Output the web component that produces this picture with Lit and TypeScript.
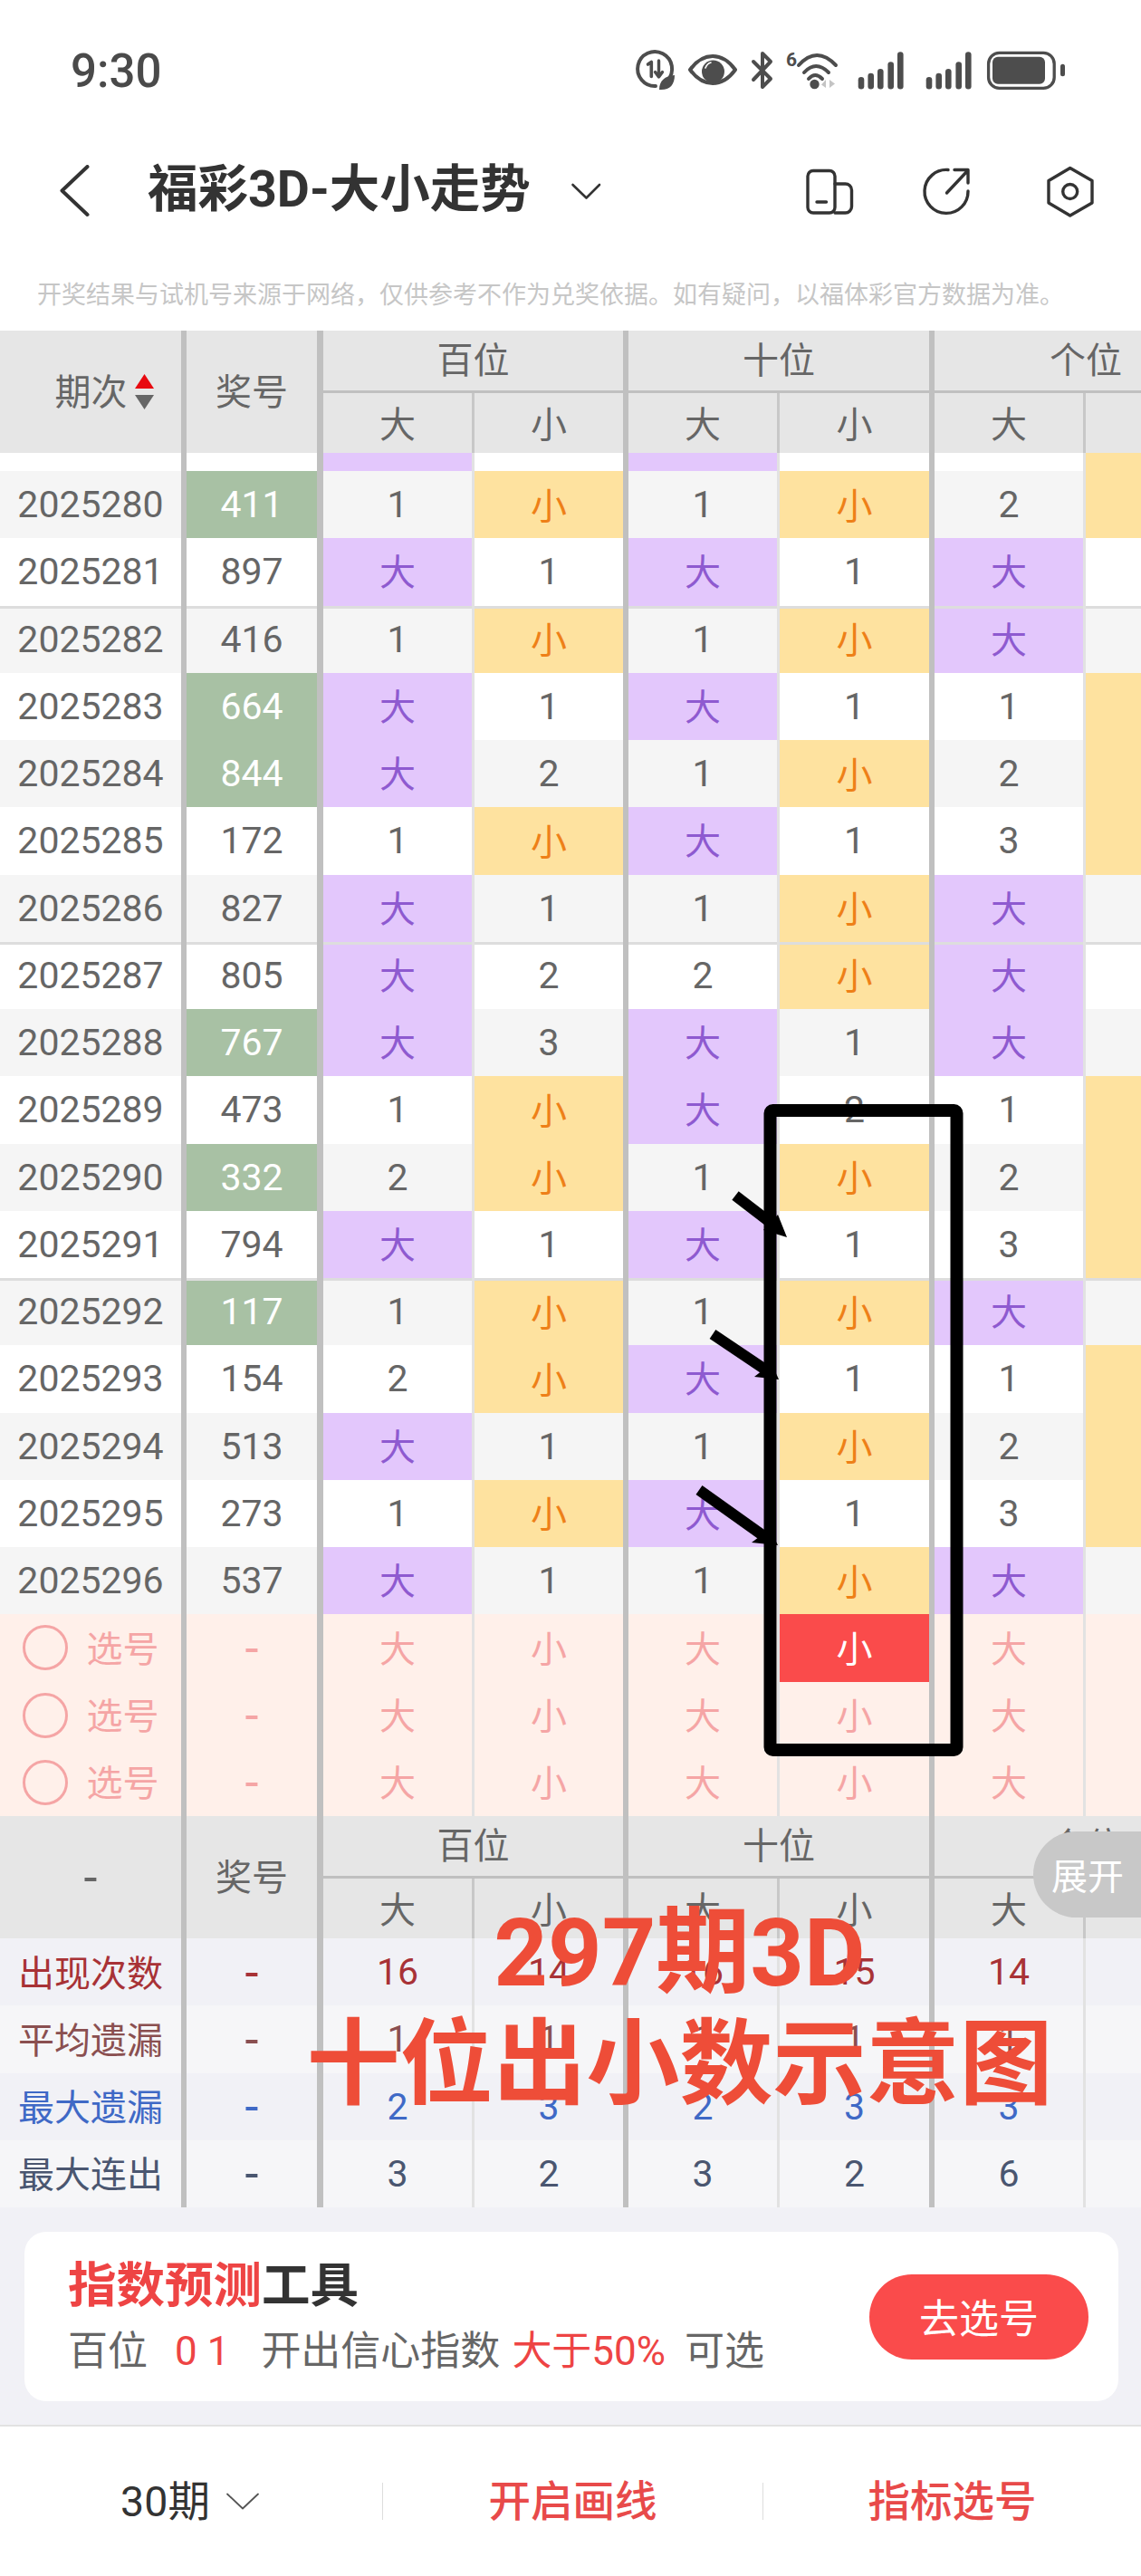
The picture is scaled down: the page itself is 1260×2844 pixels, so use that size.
import { LitElement, html, css, svg } from "lit";
import { customElement } from "lit/decorators.js";

const BIG = "大";
const SMALL = "小";
type Row = { id: string; num: string; hot?: boolean; sep?: boolean; v: string[] };

const raw: [string, string, string, string, string][] = [
  ["2025280", "411", "1小", "1小", "2"],
  ["2025281", "897", "大1", "大1", "大"],
  ["2025282", "416", "1小", "1小", "大"],
  ["2025283", "664", "大1", "大1", "1"],
  ["2025284", "844", "大2", "1小", "2"],
  ["2025285", "172", "1小", "大1", "3"],
  ["2025286", "827", "大1", "1小", "大"],
  ["2025287", "805", "大2", "2小", "大"],
  ["2025288", "767", "大3", "大1", "大"],
  ["2025289", "473", "1小", "大2", "1"],
  ["2025290", "332", "2小", "1小", "2"],
  ["2025291", "794", "大1", "大1", "3"],
  ["2025292", "117", "1小", "1小", "大"],
  ["2025293", "154", "2小", "大1", "1"],
  ["2025294", "513", "大1", "1小", "2"],
  ["2025295", "273", "1小", "大1", "3"],
  ["2025296", "537", "大1", "1小", "大"],
];

const HOT = new Set(["411", "664", "844", "767", "332", "117"]);
const SEP = new Set(["2025282", "2025287", "2025292"]);

const rows: Row[] = raw.map(([id, num, a, b, c]) => ({
  id,
  num,
  hot: HOT.has(num),
  sep: SEP.has(id),
  v: [a[0], a[1], b[0], b[1], c, c === BIG ? "" : SMALL],
}));

const summary = [
  { label: "出现次数", tone: "t-red", v: [16, 14, 16, 15, 14] },
  { label: "平均遗漏", tone: "t-brown", v: [1, 1, 1, 1, 1] },
  { label: "最大遗漏", tone: "t-blue", v: [2, 3, 2, 3, 3] },
  { label: "最大连出", tone: "t-slate", v: [3, 2, 3, 2, 6] },
];

const sideClass = ["thin", "thick", "thin", "thick", "thin", "none"];

@customElement("app-root")
export class AppRoot extends LitElement {
  static styles = css`
    :host {
      display: block;
      position: relative;
      width: 1260px;
      height: 2844px;
      overflow: hidden;
      background: #fff;
      font-family: Roboto, "Noto Sans CJK SC", sans-serif;
      color: #666;
    }
    * { box-sizing: border-box; }
    svg { display: block; flex: none; }

    .status { height: 158px; display: flex; justify-content: space-between; padding: 50px 75px 0 78px; }
    .time { font-size: 51px; line-height: 58px; font-weight: 500; color: #4a4a4a; }

    .nav { height: 106px; display: flex; align-items: center; padding-left: 66px; }
    .title { font-size: 55.5px; line-height: 66px; font-weight: 700; color: #333; margin-left: 63px; padding-bottom: 2px; white-space: nowrap; }
    .nav-caret { margin-left: 44px; }
    .nav-tools { margin-left: auto; margin-right: 50px; }

    .note { height: 101px; padding: 45px 0 0 41px; font-size: 27px; line-height: 34px; color: #c6c6c6; white-space: nowrap; }

    .table { width: 1260px; overflow: hidden; }
    .grid { display: grid; width: 1366px; grid-template-columns: 206px 151px 167px 170px 167px 171px 167px 167px; }
    .head { grid-template-rows: 69px 66px; background: #e6e6e6; }
    .body { grid-auto-rows: 74.25px; }
    .partial { grid-auto-rows: 20px; }

    .cell { display: flex; align-items: center; justify-content: center; font-size: 40px; white-space: nowrap; }
    .id { font-size: 41px; }
    .thick { border-right: 6px solid #c0c0c0; }
    .thick-7 { border-right: 7px solid #c0c0c0; }
    .thin { border-right: 3px solid #e2e2e2; }
    .none { border-right: 0; }

    .h { background: #e6e6e6; font-size: 40px; color: #666; padding-bottom: 3px; }
    .h.thin { border-right-color: #c8c8c8; }
    .tall { grid-row: span 2; padding-bottom: 5px; }
    .wide { grid-column: span 2; border-bottom: 3px solid #c0c0c0; padding-bottom: 6px; }
    .sortable { padding-left: 30px; gap: 8px; }
    .sortable svg { margin-top: 5px; }

    .gray { background: #f5f5f5; }
    .white { background: #fff; }
    .sep { box-shadow: inset 0 3px 0 #ddd; }
    .hot { background: #a8c1a4; color: #fff; }
    .big { background: #e3c7fc; color: #8e5ad0; font-size: 40px; padding-bottom: 4px; }
    .small { background: #fee29f; color: #ee8018; font-size: 40px; padding-bottom: 3px; }

    .pick { background: #fff0ea; color: #f5a5a5; padding-bottom: 3px; }
    .pick.on { background: #fa4b4b; color: #fff; }
    .pick-label { gap: 21px; padding-bottom: 0; }
    .pick-label span:last-child { padding-bottom: 3px; }
    .ring { width: 50px; height: 50px; border: 3px solid #f5a5a5; border-radius: 50%; }
    .dash { font-size: 54px; padding-bottom: 0; }

    .sum-a { background: #f1f1f6; }
    .sum-b { background: #f6f6f8; }
    .label { padding-bottom: 3px; }
    .t-red { color: #a83236; }
    .t-brown { color: #8a4f50; }
    .t-blue { color: #3f69c6; }
    .t-slate { color: #4a5670; }

    .tools { height: 240px; background: #f1f1f6; padding: 27px 25px 0 27px; }
    .card { height: 187px; border-radius: 24px; background: #fff; display: flex; justify-content: space-between; align-items: center; padding: 0 33px 0 48px; }
    .card-title { font-size: 53.5px; line-height: 60px; font-weight: 700; color: #333; margin-bottom: 17px; white-space: nowrap; }
    .accent { color: #ee4444; }
    .card-sub { display: flex; font-size: 44px; line-height: 50px; color: #666; white-space: nowrap; }
    .m1 { margin-left: 30px; }
    .m2 { margin-left: 35px; }
    .m3 { margin-left: 13px; }
    .m4 { margin-left: 21px; }
    .go { width: 242px; height: 94px; border-radius: 47px; background: #fa4b4b; color: #fff; font-size: 44px; padding-bottom: 2px; display: flex; align-items: center; justify-content: center; }

    .bar { height: 167px; border-top: 2px solid #e2e2e2; background: #fff; display: grid; grid-template-columns: 422px 420px 418px; align-items: center; }
    .bar-item { height: 41px; display: flex; align-items: center; justify-content: center; gap: 18px; padding-bottom: 8px; font-size: 46.5px; font-weight: 500; color: #e84a4a; }
    .bar-item + .bar-item { border-left: 1px solid #ddd; }
    .period { color: #333; font-weight: 400; padding-right: 3px; }
    .period svg { margin-top: 8px; }

    .expand { position: absolute; left: 1141px; top: 2022px; width: 119px; height: 95px; border-radius: 47.5px 0 0 47.5px; background: #c8c8c8; color: #fff; font-size: 40px; padding: 0 0 2px 20px; display: flex; align-items: center; }
    .marks { position: absolute; left: 0; top: 0; pointer-events: none; }
    .headline { position: absolute; left: 344px; top: 2095px; width: 813px; display: flex; flex-direction: column; align-items: center; color: #ee4d38; font-weight: 700; white-space: nowrap; }
    .headline div { line-height: 123px; font-size: 103px; }
    .headline .first { font-size: 104px; }
  `;

  private statusIcons() {
    return html`<svg width="490" height="55" viewBox="695 50 490 55" fill="none" stroke="#4d4d4d" stroke-width="3.5" stroke-linecap="round" stroke-linejoin="round">
      <path d="M737 89 A19 19 0 1 0 724 95" stroke-width="4"/>
      <path d="M715.5 71 l3.8-2.6 V84.5" stroke-width="3.6"/>
      <path d="M727.5 67 V84 M723.5 79.5 L727.5 85 L731.5 79.5" stroke-width="3.4"/>
      <path d="M728 99 C728 89 734 84 745 83 C745 94 739 100 728 99 Z" fill="#4d4d4d" stroke="none"/>
      <path d="M762 77 C770 66 778 62 787 62 C796 62 804 66 812 77 C804 88 796 92 787 92 C778 92 770 88 762 77 Z" stroke-width="4"/>
      <circle cx="787.5" cy="79" r="12.5" fill="#4d4d4d" stroke="none"/>
      <path d="M779 75 Q781 70 785 69" stroke="#fff" stroke-width="1.6"/>
      <path d="M832 68 L851 87 L842 96 V59 L851 68 L832 88" stroke-width="4"/>
      <text x="868" y="73" font-size="21" font-weight="700" fill="#4d4d4d" stroke="none" font-family="Roboto">6</text>
      <path d="M882 72 Q902 50 923 72 M888 80 Q901 66 915 80 M893 87 Q900 79 908 87" stroke-width="4"/>
      <circle cx="899.5" cy="93" r="5.2" fill="#4d4d4d" stroke="none"/>
      <path d="M912 88 V97 L907 93.5 Z M916 88 V97 L922 92.5 Z" fill="#c4c4c4" stroke="none"/>
      ${[0, 75].map((dx) =>
        [
          [951, 85],
          [961.7, 80.7],
          [972.3, 76],
          [983.7, 68.3],
          [994.3, 57.3],
        ].map(
          ([x, y]) => svg`<rect x=${x + dx - 3.3} y=${y} width="6.6" height=${98.5 - y} rx="3.3" fill="#4d4d4d" stroke="none"/>`
        )
      )}
      <rect x="1091.6" y="58.4" width="72.6" height="39" rx="12" stroke-width="3.3"/>
      <rect x="1096" y="62.7" width="58" height="30" rx="6" fill="#4d4d4d" stroke="none"/>
      <rect x="1171" y="70.7" width="5" height="13.5" rx="2.5" fill="#4d4d4d" stroke="none"/>
    </svg>`;
  }

  private headRow(first: unknown) {
    return html`<div class="grid head">
      ${first}
      <div class="cell h tall thick-7">奖号</div>
      <div class="cell h wide thick">百位</div>
      <div class="cell h wide thick">十位</div>
      <div class="cell h wide none">个位</div>
      ${[0, 1, 2, 3, 4, 5].map(
        (i) => html`<div class="cell h ${sideClass[i]}">${i % 2 ? SMALL : BIG}</div>`
      )}
    </div>`;
  }

  render() {
    const partial = ["big", "white", "big", "white", "white", "small"];
    return html`
      <div class="status">
        <div class="time">9:30</div>
        ${this.statusIcons()}
      </div>

      <div class="nav">
        <svg width="34" height="58" viewBox="66 182 34 58" fill="none" stroke="#333" stroke-width="4" stroke-linecap="round" stroke-linejoin="round"><path d="M96.5 184 L68.5 210.5 L96.5 237"/></svg>
        <div class="title">福彩3D-大小走势</div>
        <svg class="nav-caret" width="34" height="20" viewBox="629 200 34 20" fill="none" stroke="#333" stroke-width="2.6" stroke-linecap="round" stroke-linejoin="round"><path d="M631.5 203 L646.5 217.5 L661 203"/></svg>
        <svg class="nav-tools" width="320" height="58" viewBox="890 183 320 58" fill="none" stroke="#333" stroke-width="3.4" stroke-linecap="round" stroke-linejoin="round">
          <rect x="892" y="189.5" width="30" height="46.5" rx="6"/>
          <path d="M922 204 H933 A7 7 0 0 1 940.5 211 V229 A7 7 0 0 1 933.5 236 H922"/>
          <path d="M902 224 H912.5"/>
          <path d="M1047 188.5 A24 24 0 1 0 1069 212"/>
          <path d="M1045.5 214 L1069 189 M1054 188.5 H1069 V203"/>
          <path d="M1181.7 186.5 L1206 200.5 V225 L1181.7 239 L1158 225 V200.5 Z"/>
          <circle cx="1181.7" cy="212.5" r="8"/>
        </svg>
      </div>

      <div class="note">开奖结果与试机号来源于网络，仅供参考不作为兑奖依据。如有疑问，以福体彩官方数据为准。</div>

      <div class="table">
        ${this.headRow(html`<div class="cell h tall thick sortable">期次
          <svg width="21" height="40" viewBox="0 0 21 40"><path d="M10.5 0 L21 16 H0 Z" fill="#e8090f"/><path d="M0 23 H21 L10.5 39 Z" fill="#666"/></svg>
        </div>`)}

        <div class="grid partial">
          <div class="cell white thick"></div>
          <div class="cell white thick-7"></div>
          ${partial.map((c, i) => html`<div class="cell ${c} ${sideClass[i]}"></div>`)}
        </div>

        <div class="grid body">
          ${rows.map((r, n) => {
            const stripe = n % 2 ? "white" : "gray";
            const sep = r.sep ? "sep" : "";
            return html`
              <div class="cell id ${stripe} ${sep} thick">${r.id}</div>
              <div class="cell id ${r.hot ? "hot" : stripe} ${sep} thick-7">${r.num}</div>
              ${r.v.map((val, i) => {
                const tone = val === BIG ? "big" : val === SMALL ? "small" : stripe;
                return html`<div class="cell id ${tone} ${sep} ${sideClass[i]}">${val}</div>`;
              })}
            `;
          })}
          ${[0, 1, 2].map(
            (n) => html`
              <div class="cell pick pick-label thick"><span class="ring"></span><span>选号</span></div>
              <div class="cell pick dash thick-7">-</div>
              ${sideClass.map(
                (s, i) => html`<div class="cell pick ${s} ${n === 0 && i === 3 ? "on" : ""}">${i % 2 ? SMALL : BIG}</div>`
              )}
            `
          )}
        </div>

        ${this.headRow(html`<div class="cell h dash tall thick">-</div>`)}

        <div class="grid body">
          ${summary.map((s, n) => {
            const bg = n % 2 ? "sum-b" : "sum-a";
            return html`
              <div class="cell label ${bg} ${s.tone} thick">${s.label}</div>
              <div class="cell dash ${bg} ${s.tone} thick-7">-</div>
              ${sideClass.map(
                (c, i) => html`<div class="cell id ${bg} ${s.tone} ${c}">${s.v[i] ?? ""}</div>`
              )}
            `;
          })}
        </div>
      </div>

      <div class="tools">
        <div class="card">
          <div>
            <div class="card-title"><span class="accent">指数预测</span>工具</div>
            <div class="card-sub">
              <span>百位</span><span class="accent m1">0 1</span><span class="m2">开出信心指数</span><span class="accent m3">大于50%</span><span class="m4">可选</span>
            </div>
          </div>
          <div class="go">去选号</div>
        </div>
      </div>

      <div class="bar">
        <div class="bar-item period">30期
          <svg width="36" height="19" viewBox="0 0 36 19" fill="none" stroke="#555" stroke-width="1.8" stroke-linecap="round" stroke-linejoin="round"><path d="M1 1.5 L18 17.5 L35 1.5"/></svg>
        </div>
        <div class="bar-item">开启画线</div>
        <div class="bar-item">指标选号</div>
      </div>

      <div class="expand">展开</div>

      <svg class="marks" width="1260" height="2844" viewBox="0 0 1260 2844" fill="none">
        <rect x="850.5" y="1226" width="206" height="706" rx="3" stroke="#000" stroke-width="14" stroke-linejoin="round"/>
        <g stroke="#000" stroke-width="12">
          <path d="M812 1320 L855 1353"/>
          <path d="M787 1473 L848 1514"/>
          <path d="M772 1645 L845 1697"/>
        </g>
        <g fill="#000">
          <path d="M859 1341 L869 1366 L843 1358 Z"/>
          <path d="M860 1523 L833 1520 L852 1505 Z"/>
          <path d="M859 1706 L830 1703 L850 1688 Z"/>
        </g>
      </svg>

      <div class="headline">
        <div class="first">297期3D</div>
        <div>十位出小数示意图</div>
      </div>
    `;
  }
}
